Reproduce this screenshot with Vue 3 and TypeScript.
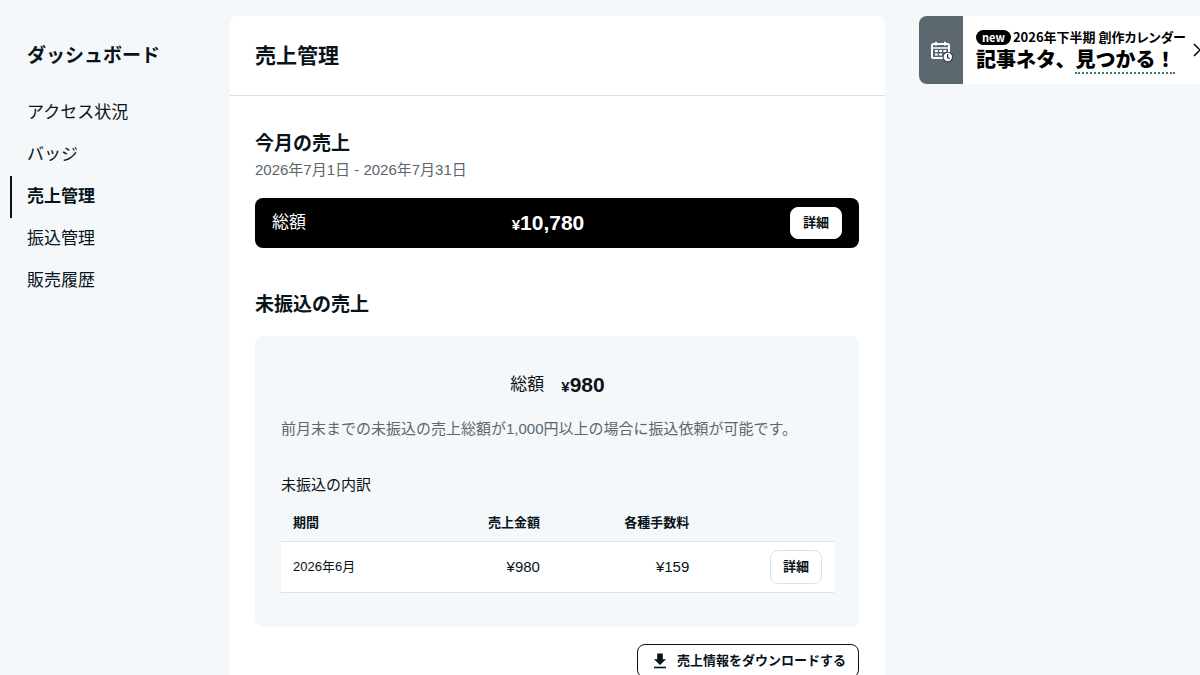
<script setup lang="ts">
interface MenuItem {
  label: string
  active?: boolean
}
interface SalesRow {
  period: string
  amount: number
  fee: number
}

const menu: MenuItem[] = [
  { label: 'アクセス状況' },
  { label: 'バッジ' },
  { label: '売上管理', active: true },
  { label: '振込管理' },
  { label: '販売履歴' },
]
const rows: SalesRow[] = [{ period: '2026年6月', amount: 980, fee: 159 }]
const format = (value: number): string => value.toLocaleString('en-US')
</script>

<template>
  <div class="page">
    <aside class="sidebar">
      <h2 class="sidebar-title">ダッシュボード</h2>
      <nav aria-label="ダッシュボード">
        <ul class="menu">
          <li v-for="item in menu" :key="item.label">
            <a href="#" class="menu-link" :class="{ active: item.active }" :aria-current="item.active ? 'page' : undefined">{{ item.label }}</a>
          </li>
        </ul>
      </nav>
    </aside>

    <main class="card">
      <header class="card-header">
        <h1>売上管理</h1>
      </header>
      <div class="card-body">
        <section>
          <h2 class="section-title">今月の売上</h2>
          <p class="range">2026年7月1日 - 2026年7月31日</p>
          <div class="total-bar">
            <span class="total-label">総額</span>
            <span class="price"><span class="yen">¥</span>10,780</span>
            <button type="button" class="button detail">詳細</button>
          </div>
        </section>

        <section class="unpaid">
          <h2 class="section-title">未振込の売上</h2>
          <div class="panel">
            <div class="panel-total">
              <span class="total-label">総額</span>
              <span class="price"><span class="yen">¥</span>980</span>
            </div>
            <p class="note">前月末までの未振込の売上総額が1,000円以上の場合に振込依頼が可能です。</p>
            <h3 id="breakdown" class="panel-title">未振込の内訳</h3>
            <table class="table" aria-labelledby="breakdown">
              <colgroup>
                <col class="col-period" />
                <col class="col-amount" />
                <col class="col-fee" />
                <col class="col-action" />
              </colgroup>
              <thead>
                <tr>
                  <th scope="col">期間</th>
                  <th scope="col" class="number">売上金額</th>
                  <th scope="col" class="number">各種手数料</th>
                  <td></td>
                </tr>
              </thead>
              <tbody>
                <tr v-for="row in rows" :key="row.period">
                  <td>{{ row.period }}</td>
                  <td class="number money">¥{{ format(row.amount) }}</td>
                  <td class="number money">¥{{ format(row.fee) }}</td>
                  <td class="number"><button type="button" class="button detail outlined">詳細</button></td>
                </tr>
              </tbody>
            </table>
          </div>
          <div class="actions">
            <button type="button" class="button download">
              <svg width="14" height="16" viewBox="0 0 14 16" aria-hidden="true">
                <path d="M4.2 0.5h5.6v5.7H13L7 12 1 6.2h3.2z" fill="currentColor" />
                <path d="M1 14.5h12" stroke="currentColor" stroke-width="1.6" />
              </svg>
              売上情報をダウンロードする
            </button>
          </div>
        </section>
      </div>
    </main>

    <aside class="promo">
      <a href="#" class="banner">
        <span class="banner-icon">
          <svg width="22" height="22" viewBox="0 0 22 22" fill="none" aria-hidden="true">
            <rect x="1" y="3" width="17" height="14" rx="1.6" stroke="#fff" stroke-width="2" />
            <path d="M1 7h17" stroke="#fff" stroke-width="1.6" />
            <path d="M5 0.8v3.8M14 0.8v3.8" stroke="#fff" stroke-width="2" />
            <path d="M4 10h2.8M8.2 10H11M12.4 10h2.8M4 13.4h2.8M8.2 13.4H11" stroke="#fff" stroke-width="2" />
            <circle cx="16.8" cy="16" r="5.2" fill="#343d43" />
            <circle cx="16.8" cy="16" r="4.2" fill="#fff" />
            <path d="M16.6 13v3.4l2 1.3" stroke="#2c353b" stroke-width="1.3" />
          </svg>
        </span>
        <span class="banner-text">
          <span class="banner-top"><span class="badge">new</span>2026年下半期 創作カレンダー</span>
          <span class="banner-main">記事ネタ、<span class="dotted">見つかる！</span></span>
        </span>
        <svg class="chevron" width="9" height="16" viewBox="0 0 9 16" fill="none" aria-hidden="true">
          <path d="M1 2l6 6-6 6" stroke="#000" stroke-width="1.5" />
        </svg>
      </a>
    </aside>
  </div>
</template>

<style>
body {
  margin: 0;
  background: #f4f8fb;
}
</style>

<style scoped>
.page {
  display: grid;
  grid-template-columns: 230px minmax(0, 1fr) 315px;
  min-height: 100vh;
  overflow: hidden;
  color: #08131a;
  background: #f4f8fb;
  font-family: "Liberation Sans", "Noto Sans CJK JP", sans-serif;
}
h1, h2, h3, p, ul {
  margin: 0;
  padding: 0;
}
a {
  color: inherit;
  text-decoration: none;
}
.sidebar {
  padding: 42px 0 0 10px;
}
.sidebar-title {
  padding-left: 17px;
  font-size: 19px;
  line-height: 28px;
}
.menu {
  margin-top: 22px;
  list-style: none;
}
.menu-link {
  display: block;
  padding-left: 15px;
  border-left: 2px solid transparent;
  font-size: 17px;
  line-height: 42px;
}
.menu-link.active {
  border-color: #08131a;
  font-weight: 700;
}
.card {
  margin-top: 16px;
  border-radius: 8px 8px 0 0;
  background: #fff;
}
.card-header {
  padding: 24px 25px;
  border-bottom: 1px solid #dde1e4;
}
.card-header h1 {
  font-size: 21px;
  line-height: 31px;
}
.card-body {
  padding: 34px 26px 32px 25px;
}
.section-title {
  font-size: 19px;
  line-height: 28px;
}
.range {
  color: #5c666d;
  font-size: 15px;
  line-height: 24px;
}
.total-bar {
  display: flex;
  align-items: center;
  justify-content: space-between;
  margin-top: 16px;
  padding: 9px 17px;
  border-radius: 8px;
  background: #000;
  color: #fff;
}
.total-label {
  font-size: 17px;
  line-height: 26px;
}
.price {
  font-size: 21px;
  font-weight: 700;
  line-height: 32px;
}
.yen {
  font-size: 15px;
  line-height: 20px;
}
.button {
  border: 1px solid #fff;
  border-radius: 8px;
  background: #fff;
  color: #08131a;
  font-family: inherit;
  font-size: 13px;
  font-weight: 700;
  line-height: 20px;
  cursor: pointer;
}
.detail {
  padding: 5px 12px;
}
.outlined {
  padding: 6px 12px;
  border-color: #dde1e4;
}
.unpaid {
  margin-top: 43px;
}
.panel {
  margin-top: 17px;
  padding: 33px 25px 34px 26px;
  border-radius: 8px;
  background: #f4f8fb;
}
.panel-total {
  display: flex;
  align-items: center;
  justify-content: center;
  gap: 17px;
}
.note {
  margin-top: 15px;
  color: #5c666d;
  font-size: 15px;
  line-height: 26px;
}
.panel-title {
  margin: 30px 0 7px;
  font-size: 15px;
  font-weight: 400;
  line-height: 26px;
}
.table {
  width: 100%;
  border-collapse: collapse;
  table-layout: fixed;
  font-size: 13px;
}
.col-period {
  width: 25%;
}
.col-amount {
  width: 24%;
}
.col-fee {
  width: 27%;
}
.col-action {
  width: 24%;
}
.table th,
.table td {
  padding: 8px 12px;
  border-bottom: 1px solid #dde1e4;
  line-height: 20px;
  text-align: left;
}
.table tbody td {
  background: #fff;
}
.table .number {
  text-align: right;
}
.table .money {
  font-size: 15px;
}
.actions {
  display: flex;
  justify-content: flex-end;
  margin-top: 17px;
}
.download {
  display: flex;
  align-items: center;
  gap: 10px;
  padding: 6px 12px 6px 15px;
  border-color: #08131a;
}
.promo {
  padding: 16px 0 0 34px;
}
.banner {
  display: flex;
  align-items: center;
  width: 300px;
  height: 68px;
  overflow: hidden;
  border-radius: 8px;
  background: #fff;
  color: #000;
  font-family: "Noto Sans CJK JP", sans-serif;
  font-weight: 700;
}
.banner-icon {
  display: flex;
  flex: none;
  align-items: center;
  justify-content: center;
  align-self: stretch;
  width: 44px;
  padding: 3px 0 0 2px;
  box-sizing: border-box;
  background: #5c666d;
}
.banner-text {
  display: flex;
  flex-direction: column;
  flex: none;
  width: 217px;
  margin-left: 13px;
  padding-top: 2px;
  white-space: nowrap;
}
.banner-top {
  display: flex;
  align-items: center;
  gap: 2px;
  font-size: 13px;
  line-height: 18px;
  font-feature-settings: "palt";
}
.badge {
  padding: 0 6px;
  border-radius: 8px;
  background: #000;
  color: #fff;
  font-size: 11px;
  line-height: 15px;
}
.banner-main {
  font-size: 20px;
  font-weight: 900;
  line-height: 26px;
}
.dotted {
  display: inline-block;
  border-bottom: 2px dotted #2f7a64;
}
.chevron {
  flex: none;
}
</style>
